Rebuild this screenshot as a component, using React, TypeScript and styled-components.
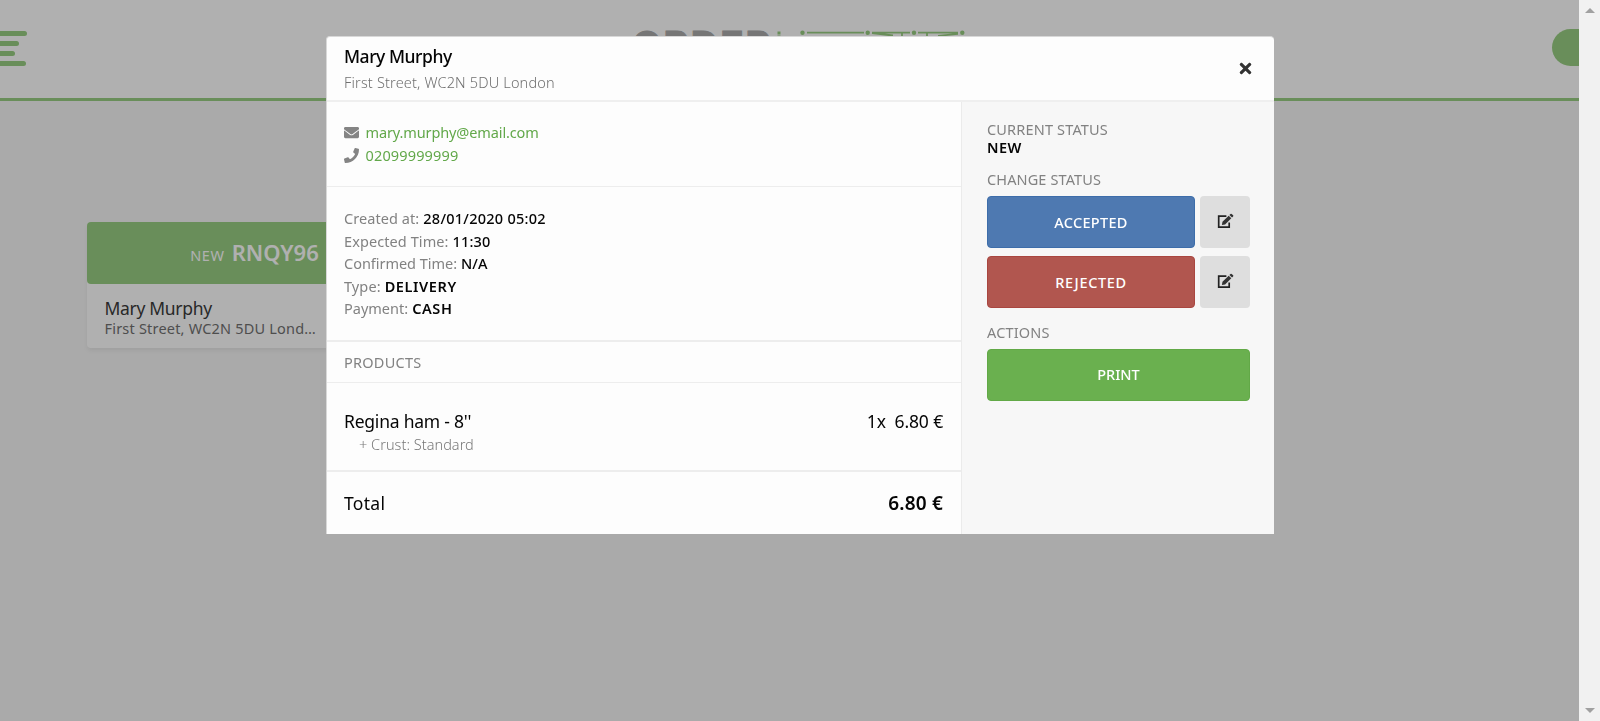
import React from 'react';
import styled, { createGlobalStyle } from 'styled-components';
import { FaEnvelope, FaPhone, FaTimes } from 'react-icons/fa';

const GlobalStyle = createGlobalStyle`
  * { box-sizing: border-box; }
  body {
    margin: 0;
    background: #f4f4f4;
    font-family: "Noto Sans", "Open Sans", sans-serif;
    font-size: 14.5px;
    overflow: hidden;
  }
`;

const GREEN = '#97cc81';

const Screen = styled.div`
  display: flex;
  height: 721px;
`;
const Page = styled.div`
  flex: 1;
  min-width: 0;
  overflow: hidden;
  background: #f4f4f4;
`;
const TopBar = styled.header`
  height: 101px;
  display: flex;
  align-items: flex-start;
  justify-content: space-between;
  background: #fdfdfd;
  border-bottom: 3px solid ${GREEN};
`;
const MenuIcon = styled.div`
  width: 181px;
  padding-top: 31px;
  display: flex;
  flex-direction: column;
  gap: 5px;
`;
const MenuBar = styled.span<{ $w: number }>`
  width: ${p => p.$w}px;
  height: 5px;
  border-radius: 0 3px 3px 0;
  background: ${GREEN};
`;
const Logo = styled.div`
  padding-top: 24px;
  width: 332px;
  display: flex;
  flex: none;
`;
const LogoWord = styled.span`
  width: 142px;
  flex: none;
  margin-left: -1px;
  margin-right: 1px;
  font: 900 36px/40px Inter, sans-serif;
  letter-spacing: 3.3px;
  -webkit-text-stroke: 0.9px #a9a9a9;
  color: #a9a9a9;
`;
const Pill = styled.div`
  width: 160px;
  padding: 29px 0 0 133px;
`;
const PillButton = styled.div`
  width: 120px;
  height: 37px;
  border-radius: 19px;
  background: ${GREEN};
`;
const Card = styled.article`
  width: 336px;
  margin: 121px 0 0 87px;
  background: #fdfdfd;
  border-radius: 4px;
  box-shadow: 0 3px 4px rgba(0, 0, 0, 0.06);
`;
const CardHead = styled.div`
  height: 62px;
  display: flex;
  align-items: baseline;
  justify-content: center;
  gap: 7px;
  padding: 16px 1px 0 0;
  border-radius: 4px;
  background: ${GREEN};
  color: #fdfdfd;
`;
const CardBody = styled.div`
  height: 64px;
  padding: 13px 17.5px;
`;

const Backdrop = styled.div`
  position: fixed;
  inset: 0;
  display: flex;
  align-items: flex-start;
  justify-content: center;
  padding-top: 36px;
  background: rgba(0, 0, 0, 0.3);
`;
const Modal = styled.section`
  width: 948px;
  height: 498px;
  display: flex;
  flex-direction: column;
  overflow: hidden;
  border-radius: 4px 4px 0 0;
  border-left: 1px solid #d8d8d8;
  border-top: 1px solid #d8d8d8;
  background: #fdfdfd;
`;
const ModalHead = styled.header`
  height: 65px;
  flex: none;
  display: flex;
  align-items: center;
  justify-content: space-between;
  padding: 0 20px 0 17px;
  border-bottom: 2px solid #efefef;
`;
const ModalBody = styled.div`
  flex: 1;
  display: flex;
`;
const Main = styled.div`
  width: 635px;
  border-right: 1px solid #ebebeb;
`;
const Section = styled.div<{ $h: number; $top: number; $line?: number }>`
  height: ${p => p.$h}px;
  padding: ${p => p.$top}px 18px 0 17px;
  border-bottom: ${p => p.$line ?? 0}px solid #ededed;
`;
const Line = styled.div<{ $h?: number; $indent?: number }>`
  height: ${p => p.$h ?? 22.5}px;
  padding-left: ${p => p.$indent ?? 0}px;
  display: flex;
  align-items: center;
  gap: 4px;
`;
const IconBox = styled.span`
  width: 17.5px;
  display: flex;
  color: #848484;
`;
const Spread = styled(Line)`
  justify-content: space-between;
`;
const Aside = styled.aside`
  flex: 1;
  padding: 17px 24px 0 25px;
  background: #f7f7f7;
`;
const GroupTitle = styled(Line)<{ $top: number }>`
  padding-top: ${p => p.$top}px;
`;
const ButtonRow = styled.div`
  display: flex;
  gap: 5px;
  margin-bottom: 8px;
`;
const Button = styled.button<{ $bg: string; $edge: string }>`
  flex: 1;
  height: 52px;
  padding: 0 0 1px;
  border: 1px solid ${p => p.$edge};
  border-radius: 4px;
  background: ${p => p.$bg};
  color: #fff;
  font: inherit;
`;
const EditButton = styled.button`
  width: 50px;
  height: 52px;
  padding: 0 0 2px 1px;
  display: flex;
  align-items: center;
  justify-content: center;
  border: 0;
  border-radius: 4px;
  background: #dedede;
  color: #333;
`;
const Text = styled.span<{ $s?: number; $w?: number; $c?: string; $ls?: number; $lh?: number }>`
  font-size: ${p => p.$s ?? 14.5}px;
  font-weight: ${p => p.$w ?? 400};
  color: ${p => p.$c ?? '#050505'};
  letter-spacing: ${p => p.$ls ?? 0}px;
  line-height: ${p => p.$lh ?? 1.3};
  white-space: pre;
`;
const Label = styled(Text).attrs({ $c: '#828282' })``;
const Stack = styled.div<{ $gap?: number }>`
  display: flex;
  flex-direction: column;
  gap: ${p => p.$gap ?? 0}px;
`;

const ScrollBar = styled.div`
  position: relative;
  z-index: 2;
  width: 21px;
  flex: none;
  display: flex;
  flex-direction: column;
  align-items: center;
  justify-content: space-between;
  padding: 8px 0;
  background: #f1f1f1;
`;
const Arrow = styled.i<{ $down?: boolean }>`
  border: 5px solid transparent;
  border-top: ${p => (p.$down ? '5px solid #a0a0a0' : '0')};
  border-bottom: ${p => (p.$down ? '0' : '5px solid #a0a0a0')};
`;

const details: [string, number, string, number, number][] = [
  ['Created at:', 0.07, '28/01/2020 05:02', 0.26, 500],
  ['Expected Time:', 0.09, '11:30', 0.17, 500],
  ['Confirmed Time:', -0.03, 'N/A', 0.08, 500],
  ['Type:', 0.1, 'DELIVERY', 0.6, 600],
  ['Payment:', 0, 'CASH', 0.6, 600],
];

function LogoMark() {
  return (
    <svg width="190" height="24" viewBox="776 24 190 24" fill={GREEN} stroke={GREEN}>
      <path stroke="none" d="M777.5 31.5h3v3h-3zM777.5 35.5h3v12h-3z" />
      <path
        fill="none"
        strokeWidth="1.8"
        d="M807 32.7H864M872 32.7H910M918 32.7H958M872 33L893 35.5M902 33.5V46M927 33.5V46M938 35.8L958 33.8"
      />
      {[802.5, 867.7, 914, 962.3].map(x => (
        <circle key={x} cx={x} cy="32.8" r="2.2" stroke="none" />
      ))}
    </svg>
  );
}

function EditIcon() {
  return (
    <svg width="17" height="16" viewBox="0 0 17 16" fill="#333">
      <path d="M9.4 3.2H1.7V14.2H12.2V9.6" fill="none" stroke="#222" strokeWidth="1.7" />
      <path d="M4.9 12.1L5.5 8.8L11.7 2.7L14.3 5.3L8.1 11.4Z" />
      <path d="M12.4 2L13.5.9Q14.1.4 14.7.9L16.1 2.3Q16.6 2.9 16.1 3.5L15 4.6Z" />
    </svg>
  );
}

export default function App() {
  return (
    <>
      <GlobalStyle />
      <Screen>
        <Page>
          <TopBar>
            <MenuIcon>
              <MenuBar $w={26.5} />
              <MenuBar $w={19} />
              <MenuBar $w={15} />
              <MenuBar $w={26} />
            </MenuIcon>
            <Logo>
              <LogoWord>ORDER</LogoWord>
              <LogoMark />
            </Logo>
            <Pill>
              <PillButton />
            </Pill>
          </TopBar>
          <Card>
            <CardHead>
              <Text $c="inherit" $ls={0.6}>NEW</Text>
              <Text $c="inherit" $s={22} $w={600}>RNQY96</Text>
            </CardHead>
            <CardBody>
              <Stack>
                <Text $s={17.5} $c="#3a3a3a" $ls={-0.32}>Mary Murphy</Text>
                <Text $c="#707070" $ls={0.2} $lh={1.15}>First Street, WC2N 5DU Lond…</Text>
              </Stack>
            </CardBody>
          </Card>
        </Page>
        <ScrollBar>
          <Arrow />
          <Arrow $down />
        </ScrollBar>
      </Screen>
      <Backdrop>
        <Modal>
          <ModalHead>
            <Stack $gap={5}>
              <Text $s={17.5} $w={500} $ls={-0.46}>Mary Murphy</Text>
              <Text $w={300} $c="#707070" $ls={0.16}>First Street, WC2N 5DU London</Text>
            </Stack>
            <FaTimes size={17} color="#333" />
          </ModalHead>
          <ModalBody>
            <Main>
              <Section $h={85} $top={19.5} $line={1}>
                <Line>
                  <IconBox><FaEnvelope size={15} /></IconBox>
                  <Text $c="#62a84a" $ls={-0.12}>mary.murphy@email.com</Text>
                </Line>
                <Line>
                  <IconBox><FaPhone size={15} /></IconBox>
                  <Text $c="#62a84a" $ls={0.15}>02099999999</Text>
                </Line>
              </Section>
              <Section $h={155} $top={20.5} $line={2}>
                {details.map(([label, ls, value, vls, weight]) => (
                  <Line key={label}>
                    <Label $ls={ls}>{label}</Label>
                    <Text $w={weight} $ls={vls}>{value}</Text>
                  </Line>
                ))}
              </Section>
              <Section $h={41} $top={9} $line={1}>
                <Line><Label $ls={0.25}>PRODUCTS</Label></Line>
              </Section>
              <Section $h={89} $top={26} $line={2}>
                <Spread $h={24}>
                  <Text $s={17.5} $ls={-0.22}>Regina ham - 8''</Text>
                  <Text $s={17.5} $ls={-0.15}>{'1x  6.80 €'}</Text>
                </Spread>
                <Line $indent={15}>
                  <Text $w={300} $c="#787878" $ls={0.03}>+ Crust: Standard</Text>
                </Line>
              </Section>
              <Section $h={62} $top={19}>
                <Spread $h={24}>
                  <Text $s={17.5} $ls={0.3}>Total</Text>
                  <Text $s={19} $w={600} $ls={0.2}>6.80 €</Text>
                </Spread>
              </Section>
            </Main>
            <Aside>
              <Line $h={20}><Label $ls={0.17}>CURRENT STATUS</Label></Line>
              <Line $h={16}><Text $w={600} $ls={0.5}>NEW</Text></Line>
              <GroupTitle $h={41} $top={7}><Label $ls={0.12}>CHANGE STATUS</Label></GroupTitle>
              <ButtonRow>
                <Button $bg="#4e79b1" $edge="#3d6daa"><Text $c="#fff" $w={500} $ls={0.3}>ACCEPTED</Text></Button>
                <EditButton><EditIcon /></EditButton>
              </ButtonRow>
              <ButtonRow>
                <Button $bg="#b1564f" $edge="#a94640"><Text $c="#fff" $w={500} $ls={0.65}>REJECTED</Text></Button>
                <EditButton><EditIcon /></EditButton>
              </ButtonRow>
              <GroupTitle $h={32.5} $top={0}><Label $ls={0.17}>ACTIONS</Label></GroupTitle>
              <ButtonRow>
                <Button $bg="#6ab04f" $edge="#62a947"><Text $c="#fff" $w={500}>PRINT</Text></Button>
              </ButtonRow>
            </Aside>
          </ModalBody>
        </Modal>
      </Backdrop>
    </>
  );
}
